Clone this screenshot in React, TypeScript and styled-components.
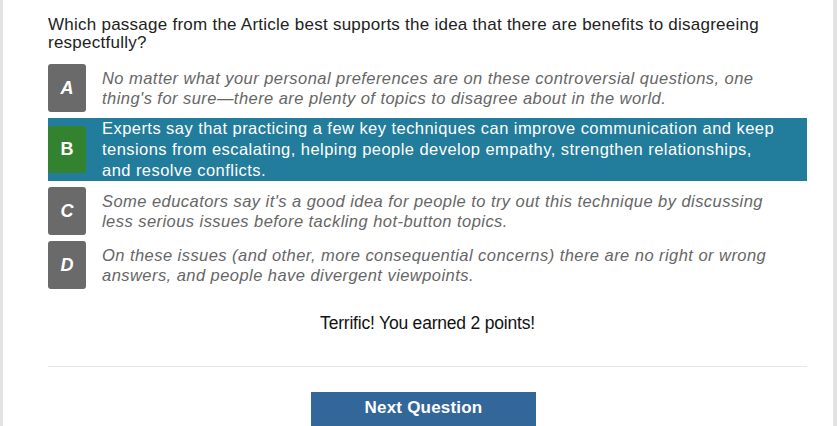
import React from "react";
import styled, { createGlobalStyle } from "styled-components";

const Global = createGlobalStyle`
  html, body { margin: 0; padding: 0; background: #ffffff; }
  body { font-family: "Liberation Sans", Arial, sans-serif; }
`;

const Frame = styled.div`
  box-sizing: border-box;
  width: 837px;
  height: 426px;
  overflow: hidden;
  border-left: 3px solid #e3e3e3;
  border-right: 4px solid #e3e3e3;
  padding: 16px 26px 0 45px;
  display: flex;
  flex-direction: column;
`;

const Question = styled.div`
  font-size: 17px;
  letter-spacing: 0.25px;
  line-height: 18px;
  color: #222222;
  margin-bottom: 12px;
  padding-right: 20px;
`;

const Options = styled.div`
  display: flex;
  flex-direction: column;
  gap: 6px;
`;

const Row = styled.div<{ $selected?: boolean }>`
  display: flex;
  align-items: center;
  gap: 16px;
  min-height: 48px;
  background: ${(p) => (p.$selected ? "#227c9b" : "transparent")};
`;

const Badge = styled.div<{ $correct?: boolean }>`
  flex: 0 0 38px;
  height: ${(p) => (p.$correct ? "47px" : "48px")};
  border-radius: 3px;
  background: ${(p) => (p.$correct ? "#33822f" : "#6a6a6a")};
  color: #ffffff;
  font-size: 18px;
  font-weight: bold;
  font-style: ${(p) => (p.$correct ? "normal" : "italic")};
  display: flex;
  align-items: center;
  justify-content: center;
`;

const OptionText = styled.div<{ $selected?: boolean }>`
  width: 676px;
  font-size: 16.5px;
  letter-spacing: 0.45px;
  line-height: ${(p) => (p.$selected ? "21px" : "20px")};
  font-style: ${(p) => (p.$selected ? "normal" : "italic")};
  color: ${(p) => (p.$selected ? "#ffffff" : "#666666")};
`;

const Feedback = styled.div`
  text-align: center;
  font-size: 17.5px;
  letter-spacing: -0.2px;
  color: #111111;
  margin-top: 24px;
  line-height: 20px;
`;

const Divider = styled.hr`
  border: 0;
  border-top: 1px solid #e6e6e6;
  margin: 33px 0 0 0;
`;

const ButtonWrap = styled.div`
  display: flex;
  justify-content: center;
  padding: 25px 8px 0 0;
`;

const NextButton = styled.button`
  width: 225px;
  height: 36px;
  border: 0;
  background: #336699;
  color: #ffffff;
  font-family: "Liberation Sans", Arial, sans-serif;
  font-size: 17px;
  letter-spacing: 0.2px;
  font-weight: bold;
  padding: 0 0 4px;
`;

const options = [
  {
    letter: "A",
    text: "No matter what your personal preferences are on these controversial questions, one thing's for sure\u2014there are plenty of topics to disagree about in the world.",
  },
  {
    letter: "B",
    text: "Experts say that practicing a few key techniques can improve communication and keep tensions from escalating, helping people develop empathy, strengthen relationships, and resolve conflicts.",
    selected: true,
  },
  {
    letter: "C",
    text: "Some educators say it's a good idea for people to try out this technique by discussing less serious issues before tackling hot-button topics.",
  },
  {
    letter: "D",
    text: "On these issues (and other, more consequential concerns) there are no right or wrong answers, and people have divergent viewpoints.",
  },
];

export default function App() {
  return (
    <>
      <Global />
      <Frame>
        <Question>
          Which passage from the Article best supports the idea that there are benefits to disagreeing respectfully?
        </Question>
        <Options>
          {options.map((o) => (
            <Row key={o.letter} $selected={o.selected}>
              <Badge $correct={o.selected}>{o.letter}</Badge>
              <OptionText $selected={o.selected}>{o.text}</OptionText>
            </Row>
          ))}
        </Options>
        <Feedback>Terrific! You earned 2 points!</Feedback>
        <Divider />
        <ButtonWrap>
          <NextButton>Next Question</NextButton>
        </ButtonWrap>
      </Frame>
    </>
  );
}
